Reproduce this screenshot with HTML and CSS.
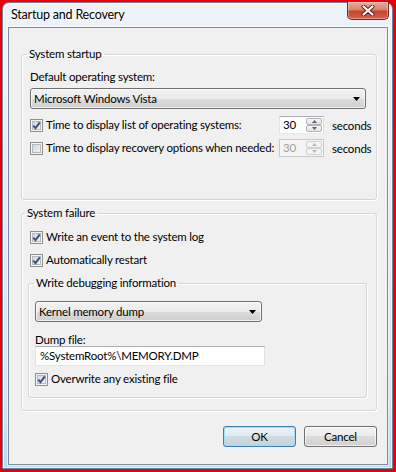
FILE: index.html
```html
<!DOCTYPE html>
<html>
	<head>
		<meta charset="UTF-8">
		<meta name="viewport" content="width=device-width, initial-scale=1.0">
		<title>Startup and Recovery</title>
		<link rel="stylesheet" href="styles.css">
	</head>
	<body>
		<div class="window">
			<div class="titlebar">
				<span class="title">Startup and Recovery</span>
				<button class="close" title="Close">
					<svg width="14" height="11" viewBox="0 0 14 11">
						<path d="M2.5 1.5 L11.5 9.5 M11.5 1.5 L2.5 9.5" stroke="#5a1f17" stroke-width="4" stroke-linecap="round"/>
						<path d="M2.5 1.5 L11.5 9.5 M11.5 1.5 L2.5 9.5" stroke="#fff" stroke-width="2.2" stroke-linecap="round"/>
					</svg>
				</button>
			</div>

			<div class="client">
				<fieldset class="group startup">
					<legend>System startup</legend>
					<div class="label">Default operating system:</div>
					<div class="combo">
						<span>Microsoft Windows Vista</span>
						<svg class="arrow" width="7" height="4" viewBox="0 0 7 4"><polygon points="0,0 7,0 3.5,4" fill="#000"/></svg>
					</div>

					<div class="timerow first">
						<label class="check">
							<span class="box"><svg width="11" height="11" viewBox="0 0 11 11"><path d="M2.2 5.6 L4.5 8.2 L8.8 2.4" fill="none" stroke="#3f5182" stroke-width="2"/></svg></span>
							Time to display list of operating systems:
						</label>
						<div class="spin">
							<span class="val">30</span>
							<span class="spinbtns">
								<span class="sbtn"><svg width="5" height="3" viewBox="0 0 5 3"><polygon points="2.5,0 5,3 0,3"/></svg></span>
								<span class="sbtn"><svg width="5" height="3" viewBox="0 0 5 3"><polygon points="0,0 5,0 2.5,3"/></svg></span>
							</span>
						</div>
						<span class="unit">seconds</span>
					</div>

					<div class="timerow">
						<label class="check">
							<span class="box"></span>
							Time to display recovery options when needed:
						</label>
						<div class="spin disabled">
							<span class="val">30</span>
							<span class="spinbtns">
								<span class="sbtn"><svg width="5" height="3" viewBox="0 0 5 3"><polygon points="2.5,0 5,3 0,3"/></svg></span>
								<span class="sbtn"><svg width="5" height="3" viewBox="0 0 5 3"><polygon points="0,0 5,0 2.5,3"/></svg></span>
							</span>
						</div>
						<span class="unit">seconds</span>
					</div>
				</fieldset>

				<fieldset class="group failure">
					<legend>System failure</legend>
					<label class="check row">
						<span class="box"><svg width="11" height="11" viewBox="0 0 11 11"><path d="M2.2 5.6 L4.5 8.2 L8.8 2.4" fill="none" stroke="#3f5182" stroke-width="2"/></svg></span>
						Write an event to the system log
					</label>
					<label class="check row second">
						<span class="box"><svg width="11" height="11" viewBox="0 0 11 11"><path d="M2.2 5.6 L4.5 8.2 L8.8 2.4" fill="none" stroke="#3f5182" stroke-width="2"/></svg></span>
						Automatically restart
					</label>

					<fieldset class="group debug">
						<legend>Write debugging information</legend>
						<div class="combo small">
							<span>Kernel memory dump</span>
							<svg class="arrow" width="7" height="4" viewBox="0 0 7 4"><polygon points="0,0 7,0 3.5,4" fill="#000"/></svg>
						</div>
						<div class="label dump">Dump file:</div>
						<div class="textbox">%SystemRoot%\MEMORY.DMP</div>
						<label class="check overwrite">
							<span class="box"><svg width="11" height="11" viewBox="0 0 11 11"><path d="M2.2 5.6 L4.5 8.2 L8.8 2.4" fill="none" stroke="#3f5182" stroke-width="2"/></svg></span>
							Overwrite any existing file
						</label>
					</fieldset>
				</fieldset>

				<div class="buttons">
					<button class="btn default">OK</button>
					<button class="btn">Cancel</button>
				</div>
			</div>
		</div>
	</body>
</html>
```

FILE: styles.css
```css
* {
	box-sizing: border-box;
}

body {
	margin: 0;
	padding: 2px 3px 3px 2px;
	width: 396px;
	height: 472px;
	background-color: #e8000b;
	font-family: Lato, "Noto Sans", sans-serif;
	font-size: 11.5px;
	letter-spacing: -0.2px;
	color: #000;
	white-space: nowrap;
}

/* window frame */
.window {
	height: 467px;
	display: flex;
	flex-direction: column;
	padding: 0 4px 3px 5px;
	border: 1px solid #6f8399;
	border-radius: 7px 7px 0 0;
	background: linear-gradient(to bottom, #eef3f9 0%, #e2ecf6 40%, #d3e4f3 85%, #bcd7ef 100%);
	box-shadow: inset 0 0 0 1px rgba(255, 255, 255, 0.7);
}

.titlebar {
	height: 24px;
	display: flex;
	justify-content: space-between;
	align-items: flex-start;
	margin-left: -2px;
	margin-right: -1px;
}

.title {
	padding: 4px 0 0 5px;
	font-size: 12.5px;
	line-height: 16px;
	color: #000;
	text-shadow: 0 0 6px #fff, 0 0 3px #fff;
}

.close {
	width: 42px;
	height: 18px;
	margin-top: -1px;
	padding: 0;
	display: flex;
	justify-content: center;
	align-items: center;
	border: 1px solid #6b2a22;
	border-top: none;
	border-radius: 0 0 5px 5px;
	background: linear-gradient(to bottom, #e9ab9c 0%, #db806c 45%, #c5452c 55%, #d4654a 100%);
	box-shadow: inset 0 0 0 1px rgba(255, 255, 255, 0.35);
}

/* client area */
.client {
	flex: 1;
	display: flex;
	flex-direction: column;
	padding: 18px 10px 0 12px;
	border: 1px solid #7d8da0;
	background-color: #f0f0f0;
	box-shadow: 0 0 0 1px rgba(255, 255, 255, 0.6);
}

.group {
	margin: 0;
	min-width: 0;
	border: 1px solid #d5d5d5;
	border-radius: 3px;
	box-shadow: 1px 1px 0 #fff, inset 1px 1px 0 #fff;
}

.group legend {
	padding: 0 2px;
	margin-left: -3px;
	line-height: 16px;
}

.startup {
	padding: 7px 10px 42px 8px;
}

.failure {
	margin-top: 5px;
	padding: 8px 9px 12px 6px;
}

.debug {
	margin-top: 7px;
	padding: 10px 8px 10px 6px;
}

.debug legend {
	margin-left: -1px;
}

.label {
	line-height: 16px;
}

.label.dump {
	margin-top: 11px;
	line-height: 13px;
}

/* combobox */
.combo {
	height: 21px;
	margin-top: 3px;
	display: flex;
	justify-content: space-between;
	align-items: center;
	padding: 0 5px 0 3px;
	border: 1px solid #707070;
	border-radius: 3px;
	background: linear-gradient(to bottom, #f2f2f2 0%, #ebebeb 50%, #dddddd 50%, #cfcfcf 100%);
	box-shadow: inset 0 0 0 1px rgba(255, 255, 255, 0.7);
}

.combo.small {
	width: 227px;
	margin-top: 0;
}

/* checkboxes */
.check {
	display: flex;
	align-items: center;
	gap: 3px;
	line-height: 16px;
}

.box {
	flex: 0 0 13px;
	width: 13px;
	height: 13px;
	display: flex;
	justify-content: center;
	align-items: center;
	border: 1px solid #8e8f8f;
	background: linear-gradient(135deg, #cdd1d6 0%, #eceef0 70%, #f7f7f7 100%);
	box-shadow: inset 0 0 0 1px #f4f4f4, inset 0 0 0 2px #b4b9be;
}

.row {
	margin-left: 2px;
}

.row.second {
	margin-top: 7px;
}

.overwrite {
	margin-top: 5px;
}

/* timeout rows */
.timerow {
	height: 18px;
	display: flex;
	align-items: center;
	margin-top: 5px;
}

.timerow.first {
	margin-top: 7px;
}

.timerow .check {
	flex: 0 0 249px;
	min-width: 0;
}

.spin {
	flex: 0 0 45px;
	height: 18px;
	display: flex;
	justify-content: space-between;
	padding: 1px;
	border: 1px solid;
	border-color: #abadb3 #dbdfe6 #e3e9ef #e2e3ea;
	background-color: #fff;
}

.spin .val {
	padding-left: 2px;
	line-height: 14px;
}

.spinbtns {
	width: 16px;
	display: flex;
	flex-direction: column;
}

.sbtn {
	flex: 1;
	display: flex;
	justify-content: center;
	align-items: center;
	border: 1px solid #b5b5b5;
	border-radius: 2px;
	background: linear-gradient(to bottom, #f7f7f7, #e2e2e2);
	fill: #4e6183;
}

.spin.disabled {
	border-color: #c9c9c9;
	background-color: #f4f4f4;
	color: #a0a0a0;
}

.spin.disabled .sbtn {
	border-color: #d2d2d2;
	background: #f4f4f4;
	fill: #b8b8b8;
}

.unit {
	flex: none;
	margin-left: 8px;
}

/* text field */
.textbox {
	width: 230px;
	height: 20px;
	padding: 0 4px;
	line-height: 18px;
	border: 1px solid;
	border-color: #abadb3 #dbdfe6 #e3e9ef #e2e3ea;
	background-color: #fff;
}

/* dialog buttons */
.buttons {
	margin-top: 15px;
	display: flex;
	justify-content: flex-end;
	gap: 8px;
}

.btn {
	width: 73px;
	height: 21px;
	padding: 0;
	font-family: inherit;
	font-size: 11.5px;
	letter-spacing: -0.2px;
	color: #000;
	border: 1px solid #707070;
	border-radius: 3px;
	background: linear-gradient(to bottom, #f2f2f2 0%, #ebebeb 50%, #dddddd 50%, #cfcfcf 100%);
	box-shadow: inset 0 0 0 1px rgba(255, 255, 255, 0.7);
}

.btn.default {
	border-color: #3c7fb1;
	background: linear-gradient(to bottom, #ecf3f7 0%, #e0e9ee 50%, #cfdbe2 50%, #c4d2da 100%);
	box-shadow: inset 0 0 0 1px #a6def5;
}
```
